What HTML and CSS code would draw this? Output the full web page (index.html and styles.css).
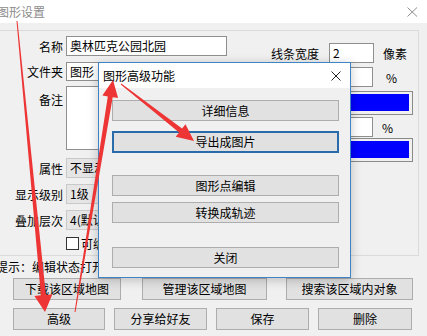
FILE: index.html
```html
<!DOCTYPE html>
<html lang="zh">
<head>
<meta charset="utf-8">
<title>图形设置</title>
<link rel="stylesheet" href="styles.css">
</head>
<body>
<div class="win">
  <div class="titlebar">
    <span class="title">图形设置</span>
    <svg class="xicon" width="11" height="10" viewBox="0 0 11 10"><path d="M0.5 0.5 L10 9.5 M10 0.5 L0.5 9.5" stroke="#8c8c8c" stroke-width="1" fill="none"/></svg>
  </div>
  <div class="panel">
    <div class="left">
      <div class="row r1"><span class="lbl">名称</span><div class="field">奥林匹克公园北园</div></div>
      <div class="row r2"><span class="lbl">文件夹</span><div class="field">图形</div></div>
      <div class="row r3"><span class="lbl lbl-top">备注</span><div class="field area"></div></div>
      <div class="row rc"><span class="lbl">属性</span><div class="combo">不显示</div></div>
      <div class="row rc"><span class="lbl">显示级别</span><div class="combo">1级</div></div>
      <div class="row rc last"><span class="lbl">叠加层次</span><div class="combo">4(默认)</div></div>
      <div class="chkrow"><span class="chk"></span><span>可编辑</span></div>
    </div>
    <div class="right">
      <div class="rrow ra"><span class="rlbl">线条宽度</span><div class="field small">2</div><span class="unit u1">像素</span></div>
      <div class="rrow rb"><span class="rlbl"></span><div class="field small s2"></div><span class="unit u2">%</span></div>
      <div class="color c1"><span></span></div>
      <div class="rrow rd"><span class="rlbl"></span><div class="field small s2"></div><span class="unit u3">%</span></div>
      <div class="color"><span></span></div>
    </div>
  </div>
  <div class="hint">提示：编辑状态打开后可在地图上拖动节点</div>
  <div class="btnrow row1">
    <div class="btn b11">下载该区域地图</div>
    <div class="btn b12">管理该区域地图</div>
    <div class="btn b13">搜索该区域内对象</div>
  </div>
  <div class="btnrow row2">
    <div class="btn b21">高级</div>
    <div class="btn b22">分享给好友</div>
    <div class="btn b23">保存</div>
    <div class="btn b24">删除</div>
  </div>
</div>

<div class="dialog">
  <div class="dtitle">
    <span>图形高级功能</span>
    <svg width="10" height="10" viewBox="0 0 10 10"><path d="M0.5 0.5 L9.5 9.5 M9.5 0.5 L0.5 9.5" stroke="#222" stroke-width="1" fill="none"/></svg>
  </div>
  <div class="dbody">
    <div class="btn dbtn d1">详细信息</div>
    <div class="btn dbtn focus d2">导出成图片</div>
    <div class="btn dbtn d3">图形点编辑</div>
    <div class="btn dbtn d4">转换成轨迹</div>
    <div class="btn dbtn">关闭</div>
  </div>
</div>

<svg class="arrows" width="427" height="336" viewBox="0 0 427 336">
  <polygon fill="#ee3535" points="16.5,21 17.5,21 45.9,294.9 52.4,294.2 45,312 34.4,296 40.9,295.3"/>
  <polygon fill="#ee3535" points="74.5,311.9 75.5,312.1 112.7,97.2 118.1,98.1 113,80 102.4,95.5 107.8,96.4"/>
  <polygon fill="#ee3535" points="121.3,83.6 182.1,128.5 185.5,124.2 194,141 175.7,136.8 179.1,132.5 120.7,84.4"/>
</svg>
</body>
</html>
```

FILE: styles.css
```css
* { box-sizing: border-box; }

body {
  margin: 0;
  width: 427px;
  height: 336px;
  overflow: hidden;
  position: relative;
  background: #f0f0f0;
  color: #000;
  font-family: "Noto Sans CJK SC", "Noto Sans", sans-serif;
  font-size: 12px;
  line-height: 17px;
}

.titlebar {
  height: 23px;
  background: #fff;
  display: flex;
  align-items: center;
  justify-content: space-between;
  padding-right: 9px;
}
.title {
  margin-left: -3px;
  color: #8c8c8c;
}

.panel {
  margin-top: 7px;
  width: 419px;
  height: 226px;
  border: 1px solid #dadada;
  border-left: none;
  display: flex;
}

.left {
  width: 271px;
  padding-top: 5px;
}
.row {
  display: flex;
  align-items: center;
}
.lbl {
  width: 63px;
  margin-right: 3px;
  text-align: right;
  white-space: nowrap;
}
.lbl-top {
  align-self: flex-start;
  margin-top: 5px;
}
.field {
  width: 161px;
  height: 20px;
  background: #fff;
  border: 1px solid #8f8f8f;
  padding-left: 3px;
  line-height: 18px;
  white-space: nowrap;
  overflow: hidden;
}
.r1 { margin-bottom: 6px; }
.r2 { margin-bottom: 5px; }
.r2 .field { height: 19px; line-height: 17px; }
.r3 { margin-bottom: 8px; }
.area { height: 64px; }
.combo {
  width: 161px;
  height: 20px;
  background: #e5e5e5;
  border: 1px solid #c9c9c9;
  padding-left: 3px;
  line-height: 18px;
  white-space: nowrap;
  overflow: hidden;
}
.rc { margin-bottom: 6px; }
.rc.last { margin-bottom: 7px; }
.chkrow {
  display: flex;
  align-items: center;
  height: 13px;
  padding-left: 66px;
}
.chk {
  width: 13px;
  height: 13px;
  background: #fff;
  border: 1px solid #333;
  margin-right: 2px;
}

.right {
  padding-top: 12px;
}
.rrow {
  display: flex;
  align-items: center;
  height: 20px;
}
.rlbl {
  width: 58px;
  white-space: nowrap;
}
.field.small { width: 45px; }
.field.s2 { width: 44px; }
.unit { white-space: nowrap; }
.u1 { margin-left: 9px; }
.u2 { margin-left: 13px; }
.u3 { margin-left: 9px; }
.ra, .rb { margin-bottom: 4px; }
.rd { margin-bottom: 1px; }
.color {
  margin-left: 58px;
  width: 84px;
  height: 24px;
  border: 1px solid #8a8a8a;
  padding: 2px 3px 3px 3px;
  background: #f0f0f0;
}
.color span {
  display: block;
  height: 100%;
  background: #0000ff;
}
.c1 { margin-bottom: 2px; }

.hint {
  margin-top: 2px;
  margin-left: -4px;
  width: 102px;
  overflow: hidden;
  white-space: nowrap;
}

.btnrow {
  display: flex;
  padding-left: 13px;
}
.row1 { margin-top: 3px; }
.row2 { margin-top: 8px; }

.btn {
  height: 22px;
  background: #e1e1e1;
  border: 1px solid #adadad;
  text-align: center;
  line-height: 20px;
  white-space: nowrap;
}
.b11 { width: 108px; }
.b12 { width: 125px; margin-left: 21px; }
.b13 { width: 127px; margin-left: 19px; }
.b21 { width: 92px; }
.b22 { width: 93px; margin-left: 9px; }
.b23 { width: 93px; margin-left: 9px; }
.b24 { width: 94px; margin-left: 9px; }

.dialog {
  position: absolute;
  left: 98px;
  top: 62px;
  width: 253px;
  height: 216px;
  border: 1px solid #3c84c5;
  background: #f0f0f0;
  box-shadow: 0 2px 10px rgba(0, 0, 0, 0.22);
}
.dtitle {
  height: 25px;
  background: #fff;
  display: flex;
  align-items: center;
  justify-content: space-between;
  padding: 0 9px 0 4px;
}
.dbody {
  padding: 12px 0 0 13px;
}
.dbtn {
  width: 227px;
  height: 21px;
  line-height: 19px;
}
.dbtn.focus {
  height: 22px;
  border: 2px solid #2a6caa;
  line-height: 18px;
}
.d1 { margin-bottom: 10px; }
.d2 { margin-bottom: 22px; }
.d3 { margin-bottom: 6px; }
.d4 { margin-bottom: 24px; }

.arrows {
  position: absolute;
  left: 0;
  top: 0;
  pointer-events: none;
}
```
